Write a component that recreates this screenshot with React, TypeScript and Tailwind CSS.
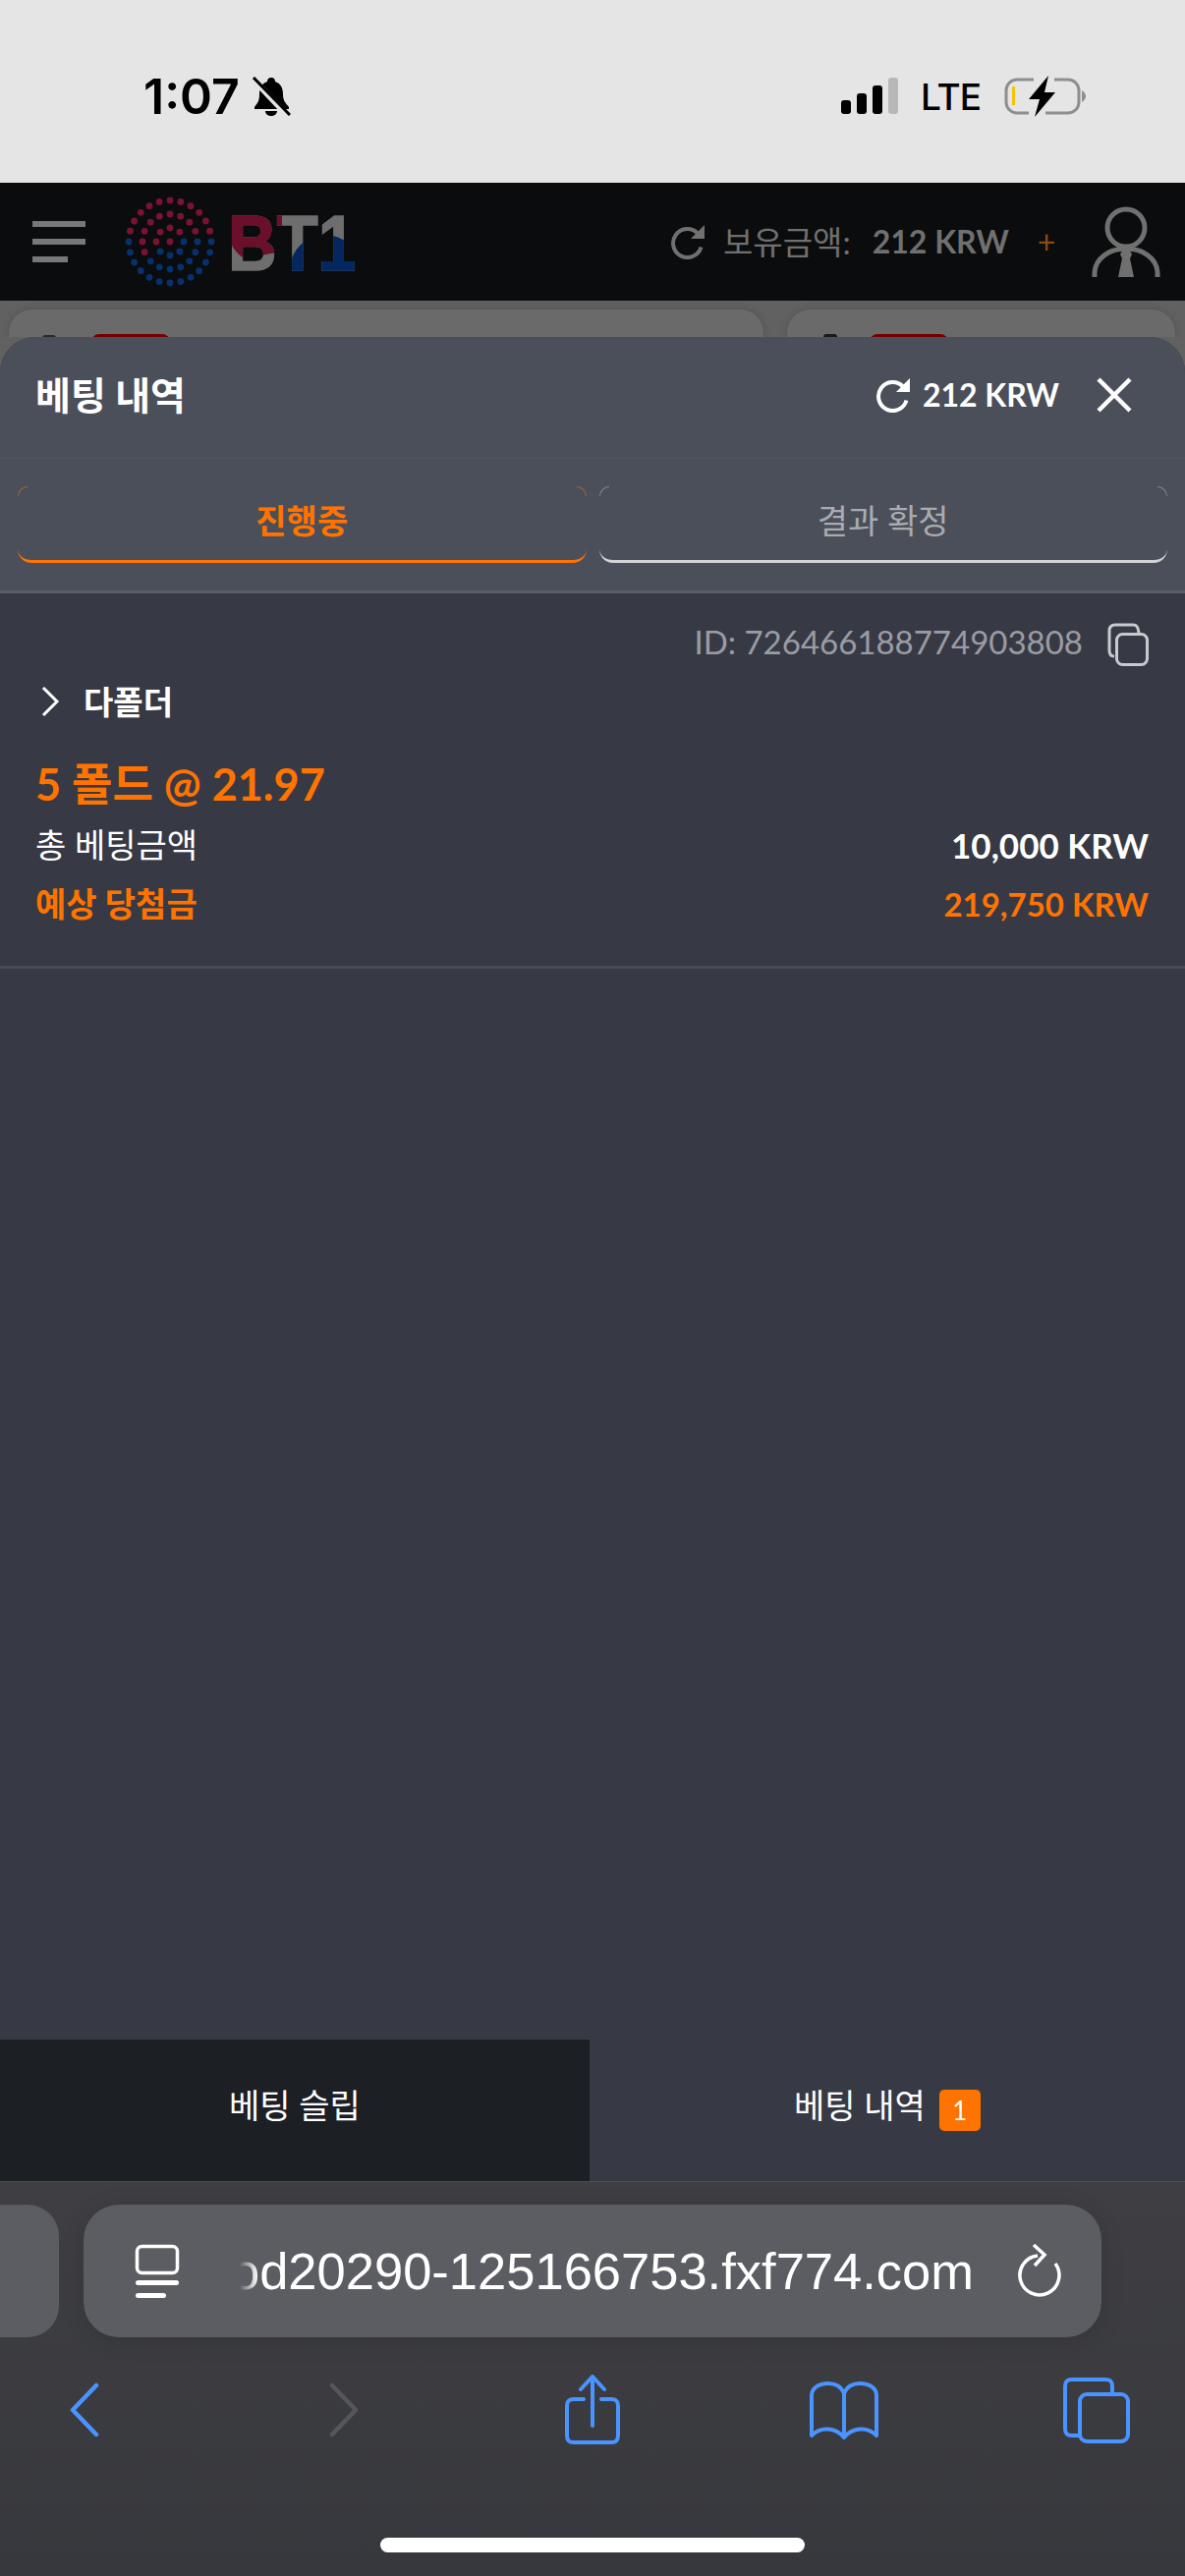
const dots = [
  { r: 42, n: 24 },
  { r: 28, n: 16 },
  { r: 14, n: 8 },
];

function boundary(dx: number) {
  if (dx < -38) return -2;
  if (dx < -10) return 11;
  if (dx < 8) return 6;
  return -5;
}

function Logo() {
  return (
    <svg width="296" height="100" viewBox="0 0 296 100" className="shrink-0">
      <defs>
        <clipPath id="b-red">
          <path d="M100 15 H162 V60 L124 67 C114 62 107 50 106 36 Z" />
        </clipPath>
        <clipPath id="t-blue">
          <path d="M170 90 V79 A36 36 0 0 1 242 79 V90 Z" />
        </clipPath>
      </defs>
      {dots.map((ring) =>
        Array.from({ length: ring.n }).map((_, i) => {
          const a = (i / ring.n) * Math.PI * 2;
          const dx = Math.sin(a) * ring.r;
          const dy = -Math.cos(a) * ring.r;
          const isBlue = dy > boundary(dx);
          return (
            <circle
              key={`${ring.r}-${i}`}
              cx={48 + dx}
              cy={50 + dy}
              r="3.4"
              fill={isBlue ? '#07316e' : '#7a1233'}
            />
          );
        })
      )}
      <circle cx="48" cy="50" r="3.4" fill="#7a1233" />
      <g fontFamily="Liberation Sans, sans-serif" fontWeight="700" fontSize="79" strokeWidth="1.5">
        <text x="107" y="79" fill="#6e6e6e" stroke="#6e6e6e" textLength="130" lengthAdjust="spacingAndGlyphs">BT1</text>
        <text x="107" y="79" fill="#6b0f2a" stroke="#6b0f2a" textLength="130" lengthAdjust="spacingAndGlyphs" clipPath="url(#b-red)">BT1</text>
        <text x="107" y="79" fill="#04275f" stroke="#04275f" textLength="130" lengthAdjust="spacingAndGlyphs" clipPath="url(#t-blue)">BT1</text>
      </g>
    </svg>
  );
}

function RefreshIcon({ className, color }: { className: string; color: string }) {
  return (
    <svg viewBox="0 0 36 36" className={className} fill="none">
      <path d="M28 9.5 A14.5 14.5 0 1 0 31.5 23.5" stroke={color} strokeWidth="4" />
      <path d="M35 1 V15 H21 Z" fill={color} />
    </svg>
  );
}

function StatusBar() {
  return (
    <div className="flex h-[186px] shrink-0 items-start bg-[#e5e5e5] font-['Inter',sans-serif] text-black">
      <span className="ml-[146px] mt-[68px] text-[50px] font-semibold leading-[60px]">1:07</span>
      <svg viewBox="0 0 40 40" className="ml-[12px] mt-[78px] h-[40px] w-[40px]">
        <path d="M20 1 C23 1 24 3 24 5 C30 7 32 12 32 18 C32 25 35 27 38 31 V33 H3 V31 C6 27 8 25 8 18 C8 12 10 7 16 5 C16 3 17 1 20 1 Z M14 35 H26 C26 38 23 40 20 40 C17 40 14 38 14 35 Z" fill="#000" />
        <path d="M0 1 L37 40" stroke="#e5e5e5" strokeWidth="6" />
        <path d="M2 1 L39 39" stroke="#000" strokeWidth="3" />
      </svg>
      <div className="ml-auto mt-[79px] flex items-end gap-[6px]">
        <div className="h-[14px] w-[10px] rounded-[3px] bg-black" />
        <div className="h-[21px] w-[10px] rounded-[3px] bg-black" />
        <div className="h-[29px] w-[10px] rounded-[3px] bg-black" />
        <div className="h-[37px] w-[10px] rounded-[3px] bg-[#b8b8b8]" />
      </div>
      <span className="ml-[23px] mt-[78px] text-[37px] font-medium leading-[42px] tracking-[-1px]">LTE</span>
      <svg viewBox="0 0 84 42" className="ml-[23px] mr-[101px] mt-[77px] h-[42px] w-[84px]">
        <path d="M31 4 H14 A11 11 0 0 0 3 15 V27 A11 11 0 0 0 14 38 H26 M52 4 H66 A11 11 0 0 1 77 15 V27 A11 11 0 0 1 66 38 H43" fill="none" stroke="#8e8e8e" strokeWidth="3" />
        <path d="M80 15 C83 17 84 19 84 21 C84 23 83 25 80 27 Z" fill="#8e8e8e" />
        <rect x="9" y="11" width="3" height="19" fill="#f5c400" />
        <path d="M46 0 L26 24 H37 L32 42 L53 17 H42 Z" fill="#000" />
      </svg>
    </div>
  );
}

function SiteHeader() {
  return (
    <div className="flex h-[120px] shrink-0 items-center bg-[#0b0c0e] font-['Lato','Noto_Sans_CJK_KR',sans-serif] text-[#707070]">
      <div className="ml-[33px] flex w-[54px] flex-col gap-[12px]">
        <div className="h-[6px] w-full bg-[#787878]" />
        <div className="h-[6px] w-full bg-[#787878]" />
        <div className="h-[6px] w-[36px] bg-[#787878]" />
      </div>
      <div className="ml-[38px]">
        <Logo />
      </div>
      <RefreshIcon className="ml-[261px] h-[36px] w-[36px]" color="#707070" />
      <span className="ml-[18px] whitespace-nowrap text-[33px] leading-[40px]">보유금액:</span>
      <span className="ml-[22px] whitespace-nowrap text-[32px] font-bold leading-[40px]">212 KRW</span>
      <span className="ml-[29px] text-[32px] leading-[40px] text-[#8a4a10]">+</span>
      <svg viewBox="0 0 70 74" className="ml-auto mr-[25px] h-[74px] w-[70px]">
        <circle cx="35" cy="23" r="19" fill="none" stroke="#707070" strokeWidth="5" />
        <path d="M3 73 V68 C4 54 18 44 35 44 C52 44 66 54 67 68 V73" fill="none" stroke="#707070" strokeWidth="5" />
        <path d="M31 46 H39 L41 50 L39 54 L43 73 H27 L31 54 L29 50 Z" fill="#707070" />
      </svg>
    </div>
  );
}

function CardPeek() {
  return (
    <div className="flex h-[37px] shrink-0 gap-[24px] overflow-hidden bg-[#616161] pl-[9px] pr-[10px] pt-[9px]">
      <div className="flex h-[60px] w-[768px] items-start rounded-t-[24px] bg-[#6a6a6a] pl-[34px] pt-[25px] shadow-[0_0_8px_rgba(0,0,0,0.15)]">
        <div className="mt-[1px] h-[3px] w-[14px] rounded-t-[3px] bg-[#2a2a2a]" />
        <div className="ml-[36px] h-[20px] w-[80px] rounded-[8px] bg-[#740000]" />
      </div>
      <div className="flex h-[60px] flex-1 items-start rounded-t-[24px] bg-[#6a6a6a] pl-[37px] pt-[25px] shadow-[0_0_8px_rgba(0,0,0,0.15)]">
        <div className="h-[4px] w-[14px] rounded-t-[3px] bg-[#1a1a1a]" />
        <div className="ml-[33px] h-[20px] w-[80px] rounded-[8px] bg-[#740000]" />
      </div>
    </div>
  );
}

function TabButton({ label, active }: { label: string; active: boolean }) {
  return (
    <div
      className={`relative flex h-[78px] flex-1 items-center justify-center rounded-b-[14px] border-b-[3px] pb-[6px] text-[34px] leading-[44px] ${
        active ? 'border-[#ff7300] font-bold text-[#ff7300]' : 'border-[#d2d3d6] text-[#a9abb0]'
      }`}
    >
      {/* only the top corners of the tab outline show */}
      <span className={`absolute left-0 top-0 h-[10px] w-[10px] rounded-tl-[12px] border-l border-t ${active ? 'border-[#a0663a]' : 'border-[#85878f]'}`} />
      <span className={`absolute right-0 top-0 h-[10px] w-[10px] rounded-tr-[12px] border-r border-t ${active ? 'border-[#a0663a]' : 'border-[#85878f]'}`} />
      {label}
    </div>
  );
}

function BetSheet() {
  return (
    <div className="flex min-h-0 flex-1 flex-col overflow-hidden rounded-t-[36px] bg-[#373a45] font-['Lato','Noto_Sans_CJK_KR',sans-serif]">
      <div className="flex h-[124px] shrink-0 items-center border-b border-[#53565f] bg-[#4b4f5a] pb-[6px] pl-[36px] pr-[54px]">
        <span className="text-[39px] font-bold leading-[48px] text-white">베팅 내역</span>
        <RefreshIcon className="ml-auto h-[36px] w-[36px]" color="#ffffff" />
        <span className="ml-[12px] whitespace-nowrap text-[32px] font-bold leading-[44px] text-white">212 KRW</span>
        <svg viewBox="0 0 36 36" className="ml-[38px] h-[36px] w-[36px]">
          <path d="M2 2 L34 34 M34 2 L2 34" stroke="#fff" strokeWidth="4.5" fill="none" />
        </svg>
      </div>
      <div className="flex h-[137px] shrink-0 items-start gap-[13px] border-b-[3px] border-[#5b5e6a] bg-[#4b4f5a] px-[18px] pt-[28px]">
        <TabButton label="진행중" active />
        <TabButton label="결과 확정" active={false} />
      </div>

      <div className="flex shrink-0 flex-col border-b-[3px] border-[#494c57] pb-[39px] pl-[36px] pr-[37px] pt-[25px]">
        <div className="flex h-[48px] items-center justify-end">
          <span className="whitespace-nowrap text-[33px] leading-[44px] text-[#9a9ca3]">ID: 726466188774903808</span>
          <svg viewBox="0 0 42 44" className="ml-[25px] mt-[6px] h-[44px] w-[42px]" fill="none" stroke="#c8cacd" strokeWidth="3">
            <path d="M7 34 C3 34 2 31 2 28 V8 C2 4 4 2 8 2 H26 C30 2 31 4 32 10" />
            <rect x="9.5" y="11.5" width="31" height="31" rx="6" />
          </svg>
        </div>
        <div className="mt-[13px] flex h-[48px] items-center">
          <svg viewBox="0 0 20 32" className="ml-[5px] h-[32px] w-[20px]" fill="none" stroke="#fff" strokeWidth="3">
            <path d="M3 2 L17 16 L3 30" />
          </svg>
          <span className="ml-[24px] text-[33px] font-bold leading-[44px] text-white">다폴더</span>
        </div>
        <div className="mt-[36px] h-[50px] text-[45px] font-bold leading-[48px] text-[#ff7300]">5 폴드 @ 21.97</div>
        <div className="mt-[12px] flex h-[48px] items-center justify-between text-[34px] leading-[44px] text-white">
          <span>총 베팅금액</span>
          <span className="text-[35px] font-bold">10,000 KRW</span>
        </div>
        <div className="mt-[12px] flex h-[48px] items-center justify-between text-[34px] font-bold leading-[44px] text-[#ff7300]">
          <span>예상 당첨금</span>
          <span className="text-[33px]">219,750 KRW</span>
        </div>
      </div>

      <div className="mt-auto flex h-[144px] shrink-0 text-[34px] leading-[44px] text-white">
        <div className="flex w-[600px] items-center justify-center bg-[#1c1f24] pb-[10px]">베팅 슬립</div>
        <div className="flex flex-1 items-center justify-center">
          <span className="mb-[10px]">베팅 내역</span>
          <span className="ml-[14px] flex h-[42px] w-[42px] items-center justify-center rounded-[5px] bg-[#ff7300] text-[26px] leading-[30px]">1</span>
        </div>
      </div>
    </div>
  );
}

function SafariBar() {
  return (
    <div className="flex h-[402px] shrink-0 flex-col border-t border-[#4c4c50] bg-gradient-to-b from-[#3f3f43] to-[#37383d]">
      <div className="mt-[23px] flex h-[135px] shrink-0 gap-[25px]">
        <div className="w-[60px] rounded-r-[32px] bg-[#5c5d62]" />
        <div className="relative flex w-[1036px] items-center rounded-[36px] bg-[#5c5d62] shadow-[0_4px_24px_rgba(0,0,0,0.12)]">
          <svg viewBox="0 0 46 56" className="ml-[52px] h-[56px] w-[46px]" fill="none">
            <rect x="2.5" y="2.5" width="41" height="27" rx="5" stroke="#fff" strokeWidth="3.5" />
            <rect x="1" y="37" width="44" height="5" rx="2.5" fill="#fff" />
            <rect x="1" y="50" width="31" height="5" rx="2.5" fill="#fff" />
          </svg>
          <div className="relative ml-[61px] w-[747px] overflow-hidden">
            <div className="flex justify-end whitespace-nowrap font-['Liberation_Sans',sans-serif] text-[52.5px] leading-[64px] text-white">
              od20290-125166753.fxf774.com
            </div>
            <div className="absolute inset-y-0 left-0 w-[18px] bg-gradient-to-r from-[#5c5d62] to-transparent" />
          </div>
          <svg viewBox="0 0 46 56" className="ml-[45px] h-[56px] w-[46px]" fill="none" stroke="#fff" strokeWidth="3.5">
            <path d="M20 12 A20 20 0 1 0 38 20" />
            <path d="M16 1 L27 11 L17 22" />
          </svg>
        </div>
      </div>
      <div className="mt-[38px] flex h-[72px] shrink-0 items-center">
        <svg viewBox="0 0 32 56" className="ml-[70px] h-[56px] w-[32px]" fill="none" stroke="#4a94ff" strokeWidth="4.5" strokeLinecap="round" strokeLinejoin="round">
          <path d="M28 3 L4 28 L28 53" />
        </svg>
        <svg viewBox="0 0 32 56" className="ml-[232px] h-[56px] w-[32px]" fill="none" stroke="#56575c" strokeWidth="4.5" strokeLinecap="round" strokeLinejoin="round">
          <path d="M4 3 L28 28 L4 53" />
        </svg>
        <svg viewBox="0 0 56 72" className="ml-[209px] h-[72px] w-[56px]" fill="none" stroke="#4a94ff" strokeWidth="4" strokeLinecap="round">
          <path d="M19 25 H9 C4 25 2 27 2 32 V62 C2 67 4 69 9 69 H47 C52 69 54 67 54 62 V32 C54 27 52 25 47 25 H37" />
          <path d="M28 52 V3 M16 15 L28 2 L40 15" strokeLinejoin="round" />
        </svg>
        <svg viewBox="0 0 72 60" className="ml-[192px] h-[60px] w-[72px]" fill="none" stroke="#4a94ff" strokeWidth="4" strokeLinecap="round" strokeLinejoin="round">
          <path d="M36 13 C33 6 27 3 20 3 C10 3 3 8 3 15 V56 C12 47 27 47 36 58 C45 47 60 47 69 56 V15 C69 8 62 3 52 3 C45 3 39 6 36 13 Z M36 13 V58" />
        </svg>
        <svg viewBox="0 0 68 68" className="ml-[187px] h-[68px] w-[68px]" fill="none" stroke="#4a94ff" strokeWidth="4">
          <path d="M16 60 H9 C4 60 2 58 2 53 V10 C2 5 4 3 9 3 H43 C48 3 50 5 50 10 V18" />
          <rect x="17" y="18" width="49" height="48" rx="7" />
        </svg>
      </div>
      <div className="mt-[94px] flex shrink-0 justify-center">
        <div className="h-[15px] w-[432px] rounded-full bg-white" />
      </div>
    </div>
  );
}

export default function App() {
  return (
    <div className="flex h-[2622px] w-[1206px] flex-col overflow-hidden bg-[#616161]">
      <StatusBar />
      <SiteHeader />
      <CardPeek />
      <BetSheet />
      <SafariBar />
    </div>
  );
}
